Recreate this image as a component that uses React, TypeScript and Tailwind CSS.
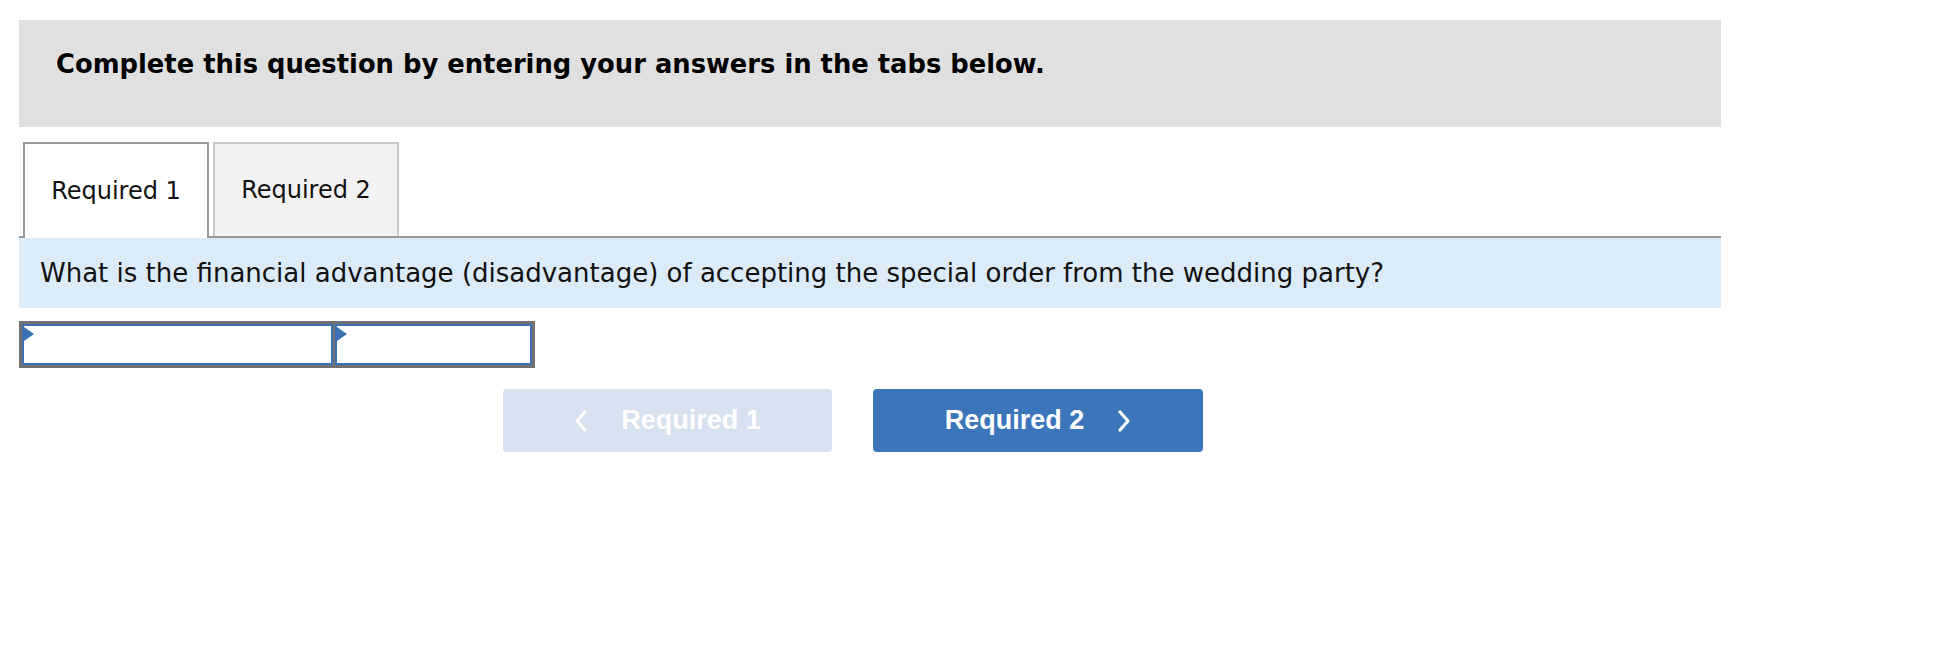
import React from 'react';

function Chevron({ dir }: { dir: 'left' | 'right' }) {
  return (
    <svg width="14" height="22" viewBox="0 0 14 22" className="shrink-0">
      <path
        d={dir === 'left' ? 'M11 2 L3 11 L11 20' : 'M3 2 L11 11 L3 20'}
        fill="none"
        stroke="white"
        strokeWidth="3.2"
        strokeLinecap="round"
        strokeLinejoin="round"
      />
    </svg>
  );
}

function AnswerCell({ width }: { width: string }) {
  return (
    <div className={`relative h-[41px] ${width} border-2 border-[#3a72b4] bg-white`}>
      {/* little blue marker in the corner */}
      <svg width="10" height="14" viewBox="0 0 10 14" className="absolute left-0 top-[1px]">
        <polygon points="0,0 10,7 0,14" fill="#3a72b4" />
      </svg>
    </div>
  );
}

export default function App() {
  return (
    <div className="min-h-screen w-[1948px] bg-white pl-[19px] pt-[20px]" style={{ fontFamily: '"DejaVu Sans", Verdana, sans-serif' }}>
      <div className="w-[1702px]">
        {/* Instructions */}
        <div className="h-[107px] bg-[#e0e0e0] pl-[37px] pt-[31px]">
          <p className="text-[25.8px] font-bold leading-[26px] text-black">
            Complete this question by entering your answers in the tabs below.
          </p>
        </div>

        {/* Tabs */}
        <div className="mt-[15px] flex gap-[4px] border-b-2 border-[#999999] pl-[4px]">
          <div className="relative z-10 -mb-[2px] flex h-[96px] w-[186px] items-center justify-center border-2 border-b-0 border-[#999999] bg-white text-[24px] text-[#111]">
            Required 1
          </div>
          <div className="flex h-[94px] w-[186px] items-center justify-center border-2 border-b-0 border-[#c8c8c8] bg-[#f2f2f2] text-[24px] text-[#111]">
            Required 2
          </div>
        </div>

        {/* Question */}
        <div className="flex h-[70px] items-center bg-[#dbebf8] pl-[21px] text-[26px] text-[#111]">
          What is the financial advantage (disadvantage) of accepting the special order from the wedding party?
        </div>

        {/* Answer row */}
        <div className="mt-[13px] flex w-fit gap-[2px] border-[3px] border-[#717171] bg-[#717171]">
          <AnswerCell width="w-[311px]" />
          <AnswerCell width="w-[197px]" />
        </div>

        {/* Navigation */}
        <div
          className="ml-[484px] mt-[21px] flex gap-[41px] text-[27px] font-bold text-white"
          style={{ fontFamily: '"Liberation Sans", Arial, sans-serif' }}
        >
          <button className="flex h-[63px] w-[329px] items-center justify-center gap-[33px] rounded-[4px] bg-[#d6e2f0]">
            <Chevron dir="left" />
            <span>Required 1</span>
          </button>
          <button className="flex h-[63px] w-[330px] items-center justify-center gap-[33px] rounded-[4px] bg-[#3a76b9]">
            <span>Required 2</span>
            <Chevron dir="right" />
          </button>
        </div>
      </div>
    </div>
  );
}
